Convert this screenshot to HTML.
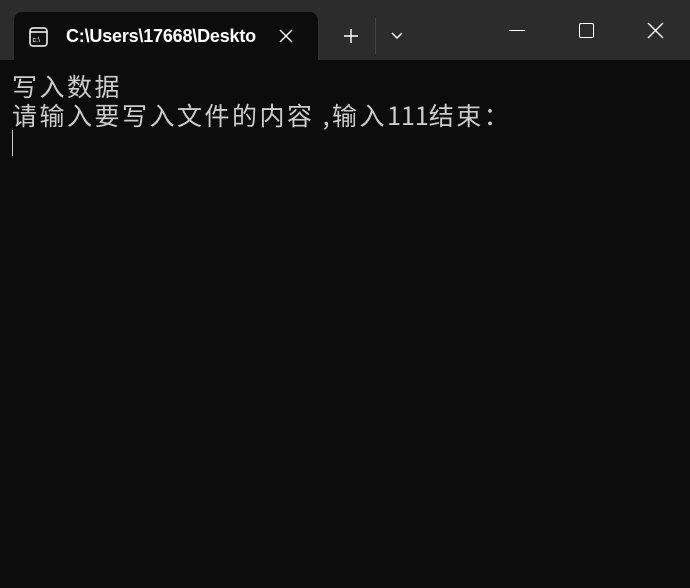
<!DOCTYPE html><html><head><style>
body{margin:0;width:690px;height:588px;background:#0c0c0c;overflow:hidden;position:relative;font-family:"Liberation Sans","Noto Sans CJK SC",sans-serif}
.bar{position:absolute;left:0;top:0;width:690px;height:60px;background:#2c2c2c}
.tab{position:absolute;left:14px;top:12px;width:304px;height:48px;background:#0c0c0c;border-radius:8px 8px 0 0}
.t{position:absolute;color:#fff;font-size:16px}
.term{position:absolute;left:12px;top:72px;color:#cccccc;font-size:25px;line-height:29px;letter-spacing:2.5px;font-family:"Noto Sans CJK SC",sans-serif;white-space:pre}
.n{letter-spacing:0}
</style></head><body>
<div class="bar"></div><div class="tab"></div>
<svg style="position:absolute;left:28px;top:26px" width="22" height="22" viewBox="0 0 22 22"><rect x="2" y="2" width="17" height="18" rx="3" fill="none" stroke="#fff" stroke-width="1.5"/><line x1="2" y1="6" x2="19" y2="6" stroke="#fff" stroke-width="1.5"/><text x="4.5" y="16" font-size="7" fill="#fff" font-family="Liberation Sans">c:\</text></svg>
<div class="t" style="left:66px;top:26px;font-size:18px;font-weight:bold;letter-spacing:-0.2px">C:\Users\17668\Deskto</div>
<svg style="position:absolute;left:278px;top:28px" width="16" height="16"><path d="M2 2L14 14M14 2L2 14" stroke="#fff" stroke-width="1.4"/></svg>
<svg style="position:absolute;left:342px;top:27px" width="18" height="18"><path d="M9 2V16M2 9H16" stroke="#fff" stroke-width="1.4"/></svg>
<div style="position:absolute;left:375px;top:18px;width:1px;height:36px;background:#444"></div>
<svg style="position:absolute;left:390px;top:30px" width="14" height="10"><path d="M2 3L7 8L12 3" fill="none" stroke="#fff" stroke-width="1.4"/></svg>
<div style="position:absolute;left:509px;top:30px;width:16px;height:1px;background:#fff"></div>
<div style="position:absolute;left:579px;top:23px;width:13px;height:13px;border:1.3px solid #fff;border-radius:2px"></div>
<svg style="position:absolute;left:647px;top:22px" width="17" height="17"><path d="M1 1L16 16M16 1L1 16" stroke="#fff" stroke-width="1.4"/></svg>
<div class="term">写入数据
请输入要写入文件的内容 ,输入<span class="n">111</span>结束：</div>
<div style="position:absolute;left:12px;top:130px;width:1px;height:26px;background:#ccc"></div>
</body></html>
